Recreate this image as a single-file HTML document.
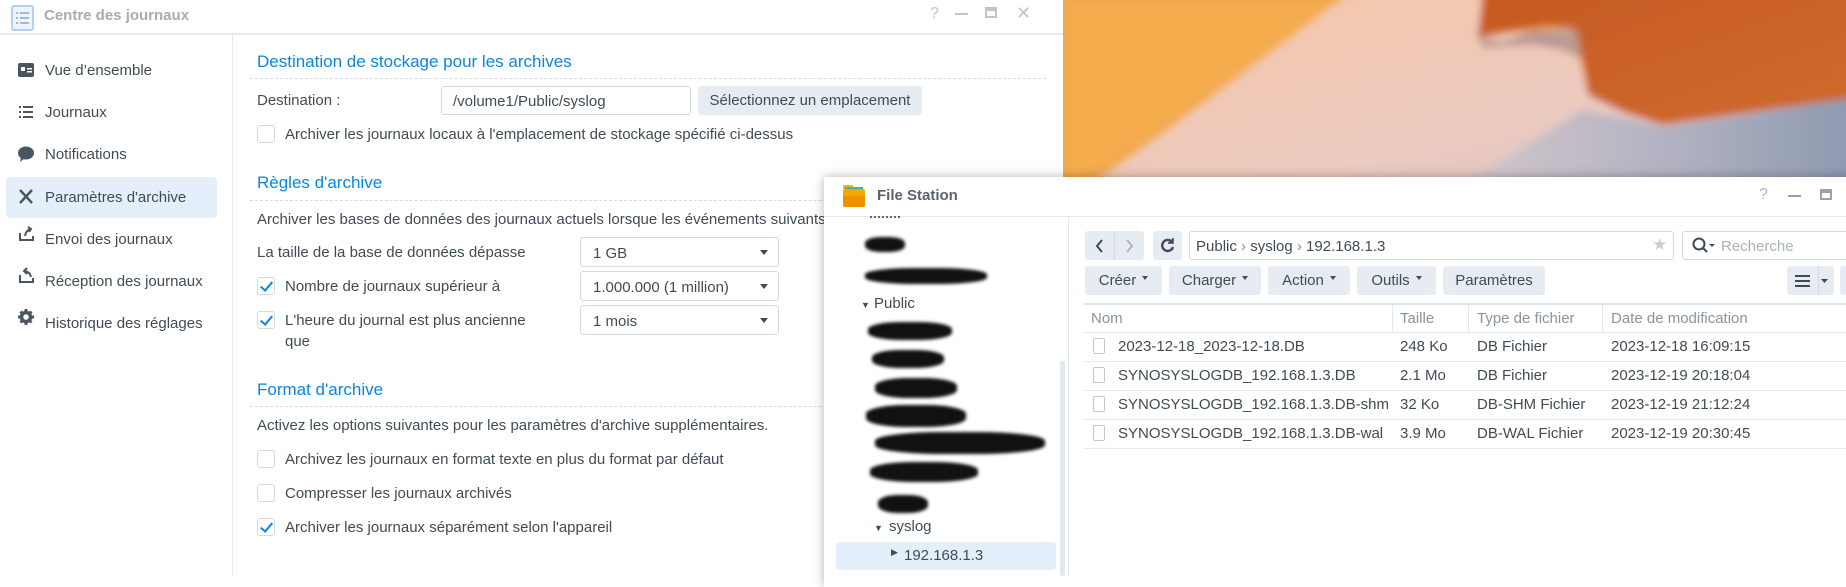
<!DOCTYPE html>
<html><head><meta charset="utf-8"><style>
*{box-sizing:border-box;margin:0;padding:0}
body{width:1846px;height:576px;overflow:hidden;background:#fff;font-family:"Liberation Sans",sans-serif;color:#414b55;font-size:15px;position:relative}
.a{position:absolute;white-space:nowrap}
.h{color:#0a86e0;font-size:17px}
.dot{position:absolute;border-top:1px dashed #d6dce3;height:0}
.cb{position:absolute;width:18px;height:18px;border:1px solid #d3d9e0;border-radius:3px;background:#fff}
.cb.on::after{content:"";position:absolute;left:5px;top:1px;width:5px;height:10px;border:solid #0a86e0;border-width:0 2.5px 2.5px 0;transform:rotate(40deg)}
.sel{position:absolute;border:1px solid #d3d9e0;border-radius:3px;background:#fff;height:30px;width:199px;left:580px;padding:7px 12px}
.sel::after{content:"";position:absolute;right:10px;top:12px;border:4px solid transparent;border-top:5px solid #414b55}
.btn{position:absolute;background:#e7ecf2;border-radius:3px;height:29px;top:266px;text-align:center;padding-top:6px}
.car{display:inline-block;margin-left:6px;border:3.5px solid transparent;border-top:4px solid #414b55;vertical-align:2px}
.blob{position:absolute;background:#111;border-radius:40%;filter:blur(1.5px)}
</style></head><body>
<!-- left window title -->
<svg class="a" style="left:11px;top:5px" width="23" height="26" viewBox="0 0 23 26"><rect x="1" y="1" width="21" height="24" rx="2" fill="#eef4fd" stroke="#b8cfef" stroke-width="2"/><g fill="#9fb8dc"><rect x="5" y="7" width="2" height="2"/><rect x="9" y="7" width="9" height="2"/><rect x="5" y="12" width="2" height="2"/><rect x="9" y="12" width="9" height="2"/><rect x="5" y="17" width="2" height="2" fill="#f2a08a"/><rect x="9" y="17" width="9" height="2"/></g></svg>
<div class="a" style="left:44px;top:7px;font-size:15px;color:#a6adb4;font-weight:bold">Centre des journaux</div>
<div class="a" style="left:930px;top:5px;color:#c0c5cb;font-size:16px">?</div>
<div class="a" style="left:955px;top:13px;width:13px;height:2px;background:#c0c5cb"></div>
<div class="a" style="left:985px;top:7px;width:12px;height:11px;border:2px solid #c0c5cb;border-top-width:4px"></div>
<div class="a" style="left:1016px;top:3px;color:#c0c5cb;font-size:18px">✕</div>
<div class="a" style="left:0;top:33px;width:1063px;height:2px;background:#e6eaef"></div>
<div class="a" style="left:232px;top:35px;width:1px;height:541px;background:#e6eaef"></div>
<!-- sidebar -->
<div class="a" style="left:6px;top:177px;width:211px;height:41px;background:#e4effb;border-radius:4px"></div>
<svg class="a" style="left:18px;top:62px" width="18" height="160" viewBox="0 0 18 160" fill="#4a5560">
<rect x="0" y="1" width="16" height="14" rx="2"/><rect x="3" y="5" width="4" height="4" fill="#fff"/><rect x="9" y="6" width="5" height="1.5" fill="#fff"/><rect x="9" y="9" width="5" height="1.5" fill="#fff"/>
<g transform="translate(0,42)"><rect x="1" y="2" width="2" height="2"/><rect x="1" y="7" width="2" height="2"/><rect x="1" y="12" width="2" height="2"/><rect x="5" y="2" width="10" height="2"/><rect x="5" y="7" width="10" height="2"/><rect x="5" y="12" width="10" height="2"/></g>
<g transform="translate(0,84)"><ellipse cx="8" cy="7" rx="8" ry="6.5"/><path d="M3 11 L2 16 L7 12z"/></g>
<g transform="translate(0,126)" stroke="#4a5560" stroke-width="2.4"><path d="M2 2 L14 15 M14 2 L2 15"/></g>
</svg>
<svg class="a" style="left:18px;top:225px" width="18" height="120" viewBox="0 0 18 120" fill="none" stroke="#4a5560" stroke-width="2">
<path d="M2 8 V15 H15 V11 M7 11 Q8 5 13 4 M10 2 L13 4 L11 7"/>
<g transform="translate(0,42)"><path d="M2 8 V15 H15 V11 M13 10 Q12 5 7 4 M9 1 L6 4 L9 7"/></g>
<g transform="translate(0,84)"><circle cx="8" cy="8" r="4.5" stroke-width="3.5"/><path d="M8 0V3M8 13V16M0 8H3M13 8H16M2.5 2.5L4.5 4.5M11.5 11.5L13.5 13.5M2.5 13.5L4.5 11.5M11.5 4.5L13.5 2.5" stroke-width="3"/></g>
</svg>
<div class="a" style="left:45px;top:62px">Vue d’ensemble</div>
<div class="a" style="left:45px;top:104px">Journaux</div>
<div class="a" style="left:45px;top:146px">Notifications</div>
<div class="a" style="left:45px;top:189px">Paramètres d'archive</div>
<div class="a" style="left:45px;top:231px">Envoi des journaux</div>
<div class="a" style="left:45px;top:273px">Réception des journaux</div>
<div class="a" style="left:45px;top:315px">Historique des réglages</div>
<!-- content -->
<div class="a h" style="left:257px;top:52px">Destination de stockage pour les archives</div>
<div class="dot" style="left:250px;top:78px;width:796px"></div>
<div class="a" style="left:257px;top:92px">Destination :</div>
<div class="a" style="left:441px;top:86px;width:250px;height:29px;border:1px solid #d3d9e0;border-radius:3px;padding:6px 11px">/volume1/Public/syslog</div>
<div class="a" style="left:698px;top:86px;width:224px;height:29px;background:#e7ecf2;border-radius:3px;text-align:center;padding-top:6px">Sélectionnez un emplacement</div>
<div class="cb" style="left:257px;top:125px"></div>
<div class="a" style="left:285px;top:126px">Archiver les journaux locaux à l'emplacement de stockage spécifié ci-dessus</div>
<div class="a h" style="left:257px;top:173px">Règles d'archive</div>
<div class="dot" style="left:250px;top:200px;width:796px"></div>
<div class="a" style="left:257px;top:211px">Archiver les bases de données des journaux actuels lorsque les événements suivants</div>
<div class="a" style="left:257px;top:244px">La taille de la base de données dépasse</div>
<div class="sel" style="top:237px">1 GB</div>
<div class="cb on" style="left:257px;top:277px"></div>
<div class="a" style="left:285px;top:278px">Nombre de journaux supérieur à</div>
<div class="sel" style="top:271px">1.000.000 (1 million)</div>
<div class="cb on" style="left:257px;top:311px"></div>
<div class="a" style="left:285px;top:312px">L'heure du journal est plus ancienne</div>
<div class="a" style="left:285px;top:333px">que</div>
<div class="sel" style="top:305px">1 mois</div>
<div class="a h" style="left:257px;top:380px">Format d'archive</div>
<div class="dot" style="left:250px;top:406px;width:796px"></div>
<div class="a" style="left:257px;top:417px">Activez les options suivantes pour les paramètres d'archive supplémentaires.</div>
<div class="cb" style="left:257px;top:450px"></div>
<div class="a" style="left:285px;top:451px">Archivez les journaux en format texte en plus du format par défaut</div>
<div class="cb" style="left:257px;top:484px"></div>
<div class="a" style="left:285px;top:485px">Compresser les journaux archivés</div>
<div class="cb on" style="left:257px;top:518px"></div>
<div class="a" style="left:285px;top:519px">Archiver les journaux séparément selon l'appareil</div>
<!-- wallpaper -->
<svg class="a" style="left:1063px;top:0" width="783" height="180" viewBox="0 0 783 180">
<defs><filter id="f"><feGaussianBlur stdDeviation="4"/></filter>
<linearGradient id="g2" x1="0" y1="0" x2="1" y2="1"><stop offset="0" stop-color="#f7c6a6"/><stop offset="0.6" stop-color="#eccabf"/><stop offset="1" stop-color="#d2c2c6"/></linearGradient>
<linearGradient id="g4" x1="0" y1="0" x2="1" y2="0"><stop offset="0" stop-color="#d6c8cc"/><stop offset="0.5" stop-color="#b4b4c2"/><stop offset="1" stop-color="#8e9ab0"/></linearGradient>
<linearGradient id="g3" x1="0" y1="0" x2="1" y2="1"><stop offset="0" stop-color="#c65a22"/><stop offset="1" stop-color="#cf6a2c"/></linearGradient></defs>
<rect width="783" height="180" fill="#f2a64a"/>
<g filter="url(#f)">
<path d="M0 0 L290 0 Q150 90 20 180 L0 180z" fill="#f5ac4e"/>
<path d="M290 -10 L420 -10 L415 35 L510 28 L525 95 L600 125 L783 98 L783 190 L20 190 Q160 90 290 -10z" fill="url(#g2)"/>
<path d="M420 -10 L790 -10 L790 98 L600 125 L560 112 L525 95 L515 30 L485 25 L415 38z" fill="url(#g3)"/>
<path d="M415 38 L440 42 L470 30 L515 30 L520 60 L500 50 L470 45 L420 48z" fill="#9b7c7c" opacity=".6"/>
<path d="M390 190 L520 110 L600 127 L790 98 L790 190z" fill="url(#g4)"/>
</g>
</svg>
<!-- File Station -->
<div class="a" style="left:824px;top:177px;width:1030px;height:410px;background:#fff;box-shadow:0 0 10px rgba(0,0,0,.3)"></div>
<svg class="a" style="left:842px;top:184px" width="24" height="24" viewBox="0 0 24 24"><rect x="1" y="1" width="10" height="4" rx="1" fill="#f2b418"/><rect x="3" y="3" width="18" height="6" fill="#4fb0a0"/><rect x="1" y="5" width="22" height="18" rx="2" fill="#f5a800"/><rect x="1" y="12" width="22" height="11" rx="2" fill="#f29000"/></svg>
<div class="a" style="left:877px;top:187px;font-weight:bold;font-size:15px;color:#5a636d">File Station</div>
<div class="a" style="left:1759px;top:186px;color:#b0b6bd;font-size:16px">?</div>
<div class="a" style="left:1788px;top:195px;width:13px;height:2px;background:#9aa1a9"></div>
<div class="a" style="left:1820px;top:189px;width:12px;height:11px;border:2px solid #9aa1a9;border-top-width:4px"></div>
<div class="a" style="left:824px;top:216px;width:1022px;height:1px;background:#e3e8ed"></div>
<div class="a" style="left:1068px;top:217px;width:1px;height:359px;background:#e3e8ed"></div>
<div class="a" style="left:1060px;top:361px;width:5px;height:215px;background:#e3e8ed;border-radius:3px"></div>
<!-- tree -->
<div class="a" style="left:870px;top:216px;width:30px;height:4px;border-top:2px dotted #666"></div>
<div class="blob" style="left:865px;top:237px;width:40px;height:15px"></div>
<div class="blob" style="left:865px;top:268px;width:122px;height:16px"></div>
<div class="a" style="left:861px;top:300px;font-size:9px">▼</div>
<div class="a" style="left:874px;top:295px">Public</div>
<div class="blob" style="left:868px;top:322px;width:84px;height:18px"></div>
<div class="blob" style="left:872px;top:350px;width:72px;height:18px"></div>
<div class="blob" style="left:875px;top:378px;width:82px;height:20px"></div>
<div class="blob" style="left:866px;top:405px;width:100px;height:22px"></div>
<div class="blob" style="left:875px;top:432px;width:170px;height:22px"></div>
<div class="blob" style="left:870px;top:462px;width:108px;height:20px"></div>
<div class="blob" style="left:878px;top:495px;width:50px;height:18px"></div>
<div class="a" style="left:874px;top:523px;font-size:9px">▼</div>
<div class="a" style="left:889px;top:518px">syslog</div>
<div class="a" style="left:836px;top:542px;width:220px;height:28px;background:#e4effb;border-radius:3px"></div>
<div class="a" style="left:891px;top:547px;font-size:9px">▶</div>
<div class="a" style="left:904px;top:547px">192.168.1.3</div>
<!-- toolbar -->
<div class="a" style="left:1085px;top:231px;width:59px;height:29px;background:#e7ecf2;border-radius:3px"></div>
<div class="a" style="left:1114px;top:231px;width:1px;height:29px;background:#d3d9e0"></div>
<svg class="a" style="left:1093px;top:238px" width="45" height="16" viewBox="0 0 45 16" fill="none" stroke-width="2"><path d="M9 2 L4 8 L9 14" stroke="#414b55"/><path d="M34 2 L39 8 L34 14" stroke="#b0b6bd"/></svg>
<div class="a" style="left:1153px;top:231px;width:29px;height:29px;background:#e7ecf2;border-radius:3px"></div>
<svg class="a" style="left:1159px;top:237px" width="17" height="17" viewBox="0 0 17 17" fill="none" stroke="#414b55" stroke-width="2.4"><path d="M13 5 A5.5 5.5 0 1 0 14 10"/><path d="M14 1 V6 H9" fill="#414b55" stroke-width="1.5"/></svg>
<div class="a" style="left:1189px;top:231px;width:485px;height:29px;border:1px solid #d3d9e0;border-radius:3px;padding:6px 6px">Public <span style="color:#888">›</span> syslog <span style="color:#888">›</span> 192.168.1.3</div>
<div class="a" style="left:1652px;top:235px;color:#c8cfd6;font-size:17px">★</div>
<div class="a" style="left:1682px;top:231px;width:170px;height:29px;border:1px solid #d3d9e0;border-radius:3px;padding:6px 0 0 38px;color:#aab1b8">Recherche</div>
<svg class="a" style="left:1692px;top:237px" width="26" height="17" viewBox="0 0 26 17" fill="none" stroke="#414b55" stroke-width="2"><circle cx="7" cy="7" r="5.5"/><path d="M11 11 L15 15"/><path d="M17 7 L23 7 L20 10z" fill="#414b55" stroke-width="0"/></svg>
<div class="btn" style="left:1085px;width:77px">Créer<span class="car"></span></div>
<div class="btn" style="left:1169px;width:92px">Charger<span class="car"></span></div>
<div class="btn" style="left:1268px;width:82px">Action<span class="car"></span></div>
<div class="btn" style="left:1357px;width:79px">Outils<span class="car"></span></div>
<div class="btn" style="left:1443px;width:102px">Paramètres</div>
<div class="btn" style="left:1787px;width:47px"></div>
<div class="a" style="left:1818px;top:266px;width:1px;height:29px;background:#d3d9e0"></div>
<svg class="a" style="left:1795px;top:274px" width="35" height="14" viewBox="0 0 35 14"><g fill="#414b55"><rect x="0" y="1" width="15" height="2"/><rect x="0" y="6" width="15" height="2"/><rect x="0" y="11" width="15" height="2"/><path d="M26 5 L33 5 L29.5 9z"/></g></svg>
<div class="btn" style="left:1840px;width:10px"></div>
<!-- table -->
<div class="a" style="left:1084px;top:303px;width:762px;height:2px;background:#dfe4ea"></div>
<div class="a" style="left:1084px;top:332px;width:762px;height:1px;background:#e3e8ed"></div>
<div class="a" style="left:1392px;top:305px;width:1px;height:27px;background:#e3e8ed"></div>
<div class="a" style="left:1468px;top:305px;width:1px;height:27px;background:#e3e8ed"></div>
<div class="a" style="left:1602px;top:305px;width:1px;height:27px;background:#e3e8ed"></div>
<div class="a" style="left:1091px;top:310px;color:#8a939c">Nom</div>
<div class="a" style="left:1400px;top:310px;color:#8a939c">Taille</div>
<div class="a" style="left:1477px;top:310px;color:#8a939c">Type de fichier</div>
<div class="a" style="left:1611px;top:310px;color:#8a939c">Date de modification</div>
<div class="a" style="left:1084px;top:361px;width:762px;height:1px;background:#e3e8ed"></div>
<div class="a" style="left:1084px;top:390px;width:762px;height:1px;background:#e3e8ed"></div>
<div class="a" style="left:1084px;top:419px;width:762px;height:1px;background:#e3e8ed"></div>
<div class="a" style="left:1084px;top:448px;width:762px;height:1px;background:#e3e8ed"></div>
<div class="a" style="left:1093px;top:338px;width:12px;height:16px;border:1px solid #c0c7ce;border-radius:2px"></div>
<div class="a" style="left:1093px;top:367px;width:12px;height:16px;border:1px solid #c0c7ce;border-radius:2px"></div>
<div class="a" style="left:1093px;top:396px;width:12px;height:16px;border:1px solid #c0c7ce;border-radius:2px"></div>
<div class="a" style="left:1093px;top:425px;width:12px;height:16px;border:1px solid #c0c7ce;border-radius:2px"></div>
<div class="a" style="left:1118px;top:338px">2023-12-18_2023-12-18.DB</div>
<div class="a" style="left:1118px;top:367px">SYNOSYSLOGDB_192.168.1.3.DB</div>
<div class="a" style="left:1118px;top:396px">SYNOSYSLOGDB_192.168.1.3.DB-shm</div>
<div class="a" style="left:1118px;top:425px">SYNOSYSLOGDB_192.168.1.3.DB-wal</div>
<div class="a" style="left:1400px;top:338px">248 Ko</div>
<div class="a" style="left:1400px;top:367px">2.1 Mo</div>
<div class="a" style="left:1400px;top:396px">32 Ko</div>
<div class="a" style="left:1400px;top:425px">3.9 Mo</div>
<div class="a" style="left:1477px;top:338px">DB Fichier</div>
<div class="a" style="left:1477px;top:367px">DB Fichier</div>
<div class="a" style="left:1477px;top:396px">DB-SHM Fichier</div>
<div class="a" style="left:1477px;top:425px">DB-WAL Fichier</div>
<div class="a" style="left:1611px;top:338px">2023-12-18 16:09:15</div>
<div class="a" style="left:1611px;top:367px">2023-12-19 20:18:04</div>
<div class="a" style="left:1611px;top:396px">2023-12-19 21:12:24</div>
<div class="a" style="left:1611px;top:425px">2023-12-19 20:30:45</div>
</body></html>
